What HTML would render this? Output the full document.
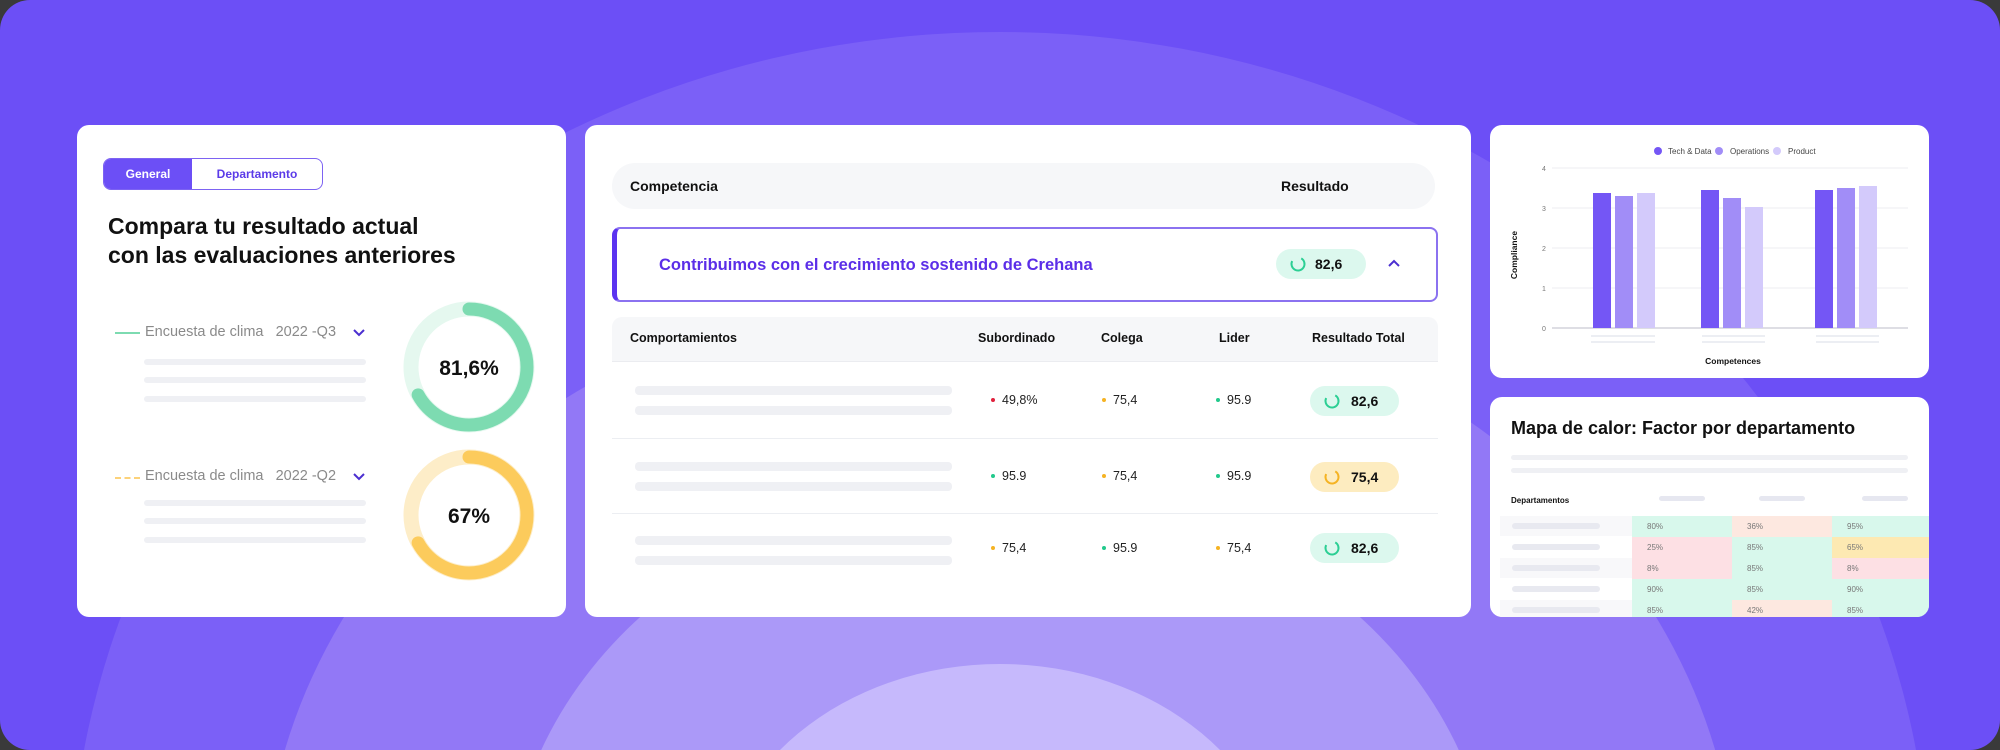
<!DOCTYPE html>
<html><head><meta charset="utf-8"><style>
*{margin:0;padding:0;box-sizing:border-box}
html,body{width:2000px;height:750px;overflow:hidden}
body{background:#3a3a3a;font-family:"Liberation Sans",sans-serif;position:relative}
#bg{position:absolute;left:0;top:0;width:2000px;height:750px}
.card{position:absolute;background:#fff;border-radius:12px;overflow:hidden}
.a{position:absolute;white-space:nowrap}
.bar{position:absolute;background:#eff0f4;border-radius:4px}
.dot{display:inline-block;width:4px;height:4px;border-radius:50%;margin-right:7px;vertical-align:middle;position:relative;top:-1px}
</style></head><body>
<svg id="bg" width="2000" height="750" viewBox="0 0 2000 750">
<defs><clipPath id="r"><rect x="0" y="0" width="2000" height="750" rx="30"/></clipPath></defs>
<g clip-path="url(#r)">
<rect width="2000" height="750" fill="#6c4ff6"/>
<ellipse cx="1000" cy="900" rx="930" ry="868" fill="#7b60f7"/>
<ellipse cx="1000" cy="900" rx="737" ry="621" fill="#9278f6"/>
<ellipse cx="1000" cy="900" rx="492" ry="415" fill="#ab99f8"/>
<ellipse cx="1000" cy="900" rx="285" ry="236" fill="#c6b9fc"/>
</g>
</svg>

<!-- Card 1 -->
<div class="card" style="left:77px;top:125px;width:489px;height:492px">
  <div class="a" style="left:26px;top:33px;width:220px;height:32px;border:1.5px solid #7d63f2;border-radius:8px;overflow:hidden">
    <div class="a" style="left:0;top:0;width:88px;height:30px;background:#6c4ff6;color:#fff;font-size:12px;font-weight:bold;text-align:center;line-height:30px">General</div>
    <div class="a" style="left:88px;top:0;width:130px;height:30px;color:#5b3be8;font-size:12px;font-weight:bold;text-align:center;line-height:30px">Departamento</div>
  </div>
  <div class="a" style="left:31px;top:87px;font-size:23px;line-height:29px;color:#111;font-weight:600">Compara tu resultado actual<br>con las evaluaciones anteriores</div>

  <div class="a" style="left:38px;top:207px;width:25px;height:2px;background:#7ddbb1"></div>
  <div class="a" style="left:68px;top:199px;font-size:14.5px;color:#8a8a8a">Encuesta de clima&nbsp;&nbsp;&nbsp;2022 -Q3</div>
  <svg class="a" style="left:275px;top:203px" width="14" height="9"><path d="M2 2 L7 7 L12 2" stroke="#4b2fd0" stroke-width="2" fill="none"/></svg>
  <div class="bar" style="left:67px;top:234px;width:222px;height:6px"></div>
  <div class="bar" style="left:67px;top:252px;width:222px;height:6px"></div>
  <div class="bar" style="left:67px;top:271px;width:222px;height:6px"></div>

  <div class="a" style="left:38px;top:352px;width:25px;height:0;border-top:2px dashed #fcd27a"></div>
  <div class="a" style="left:68px;top:343px;font-size:14.5px;color:#8a8a8a">Encuesta de clima&nbsp;&nbsp;&nbsp;2022 -Q2</div>
  <svg class="a" style="left:275px;top:347px" width="14" height="9"><path d="M2 2 L7 7 L12 2" stroke="#4b2fd0" stroke-width="2" fill="none"/></svg>
  <div class="bar" style="left:67px;top:375px;width:222px;height:6px"></div>
  <div class="bar" style="left:67px;top:393px;width:222px;height:6px"></div>
  <div class="bar" style="left:67px;top:412px;width:222px;height:6px"></div>

  <svg class="a" style="left:312px;top:162px" width="160" height="310" viewBox="0 0 160 310">
    <circle cx="80" cy="80" r="58" fill="none" stroke="#e5f8ef" stroke-width="15"/>
    <circle cx="80" cy="80" r="58" fill="none" stroke="#7ddbb1" stroke-width="13" stroke-linecap="round" stroke-dasharray="244 400" transform="rotate(-90 80 80)"/>
    <text x="80" y="88" text-anchor="middle" font-family="Liberation Sans" font-weight="bold" font-size="21" fill="#111">81,6%</text>
    <circle cx="80" cy="228" r="58" fill="none" stroke="#fdedc8" stroke-width="15"/>
    <circle cx="80" cy="228" r="58" fill="none" stroke="#fccb5c" stroke-width="13" stroke-linecap="round" stroke-dasharray="244 400" transform="rotate(-90 80 228)"/>
    <text x="80" y="236" text-anchor="middle" font-family="Liberation Sans" font-weight="bold" font-size="21" fill="#111">67%</text>
  </svg>
</div>

<!-- Card 2 -->
<div class="card" style="left:585px;top:125px;width:886px;height:492px">
  <div class="a" style="left:27px;top:38px;width:823px;height:46px;background:#f6f7f9;border-radius:23px"></div>
  <div class="a" style="left:45px;top:53px;font-size:14px;font-weight:600;color:#111">Competencia</div>
  <div class="a" style="left:696px;top:53px;font-size:14px;font-weight:600;color:#111">Resultado</div>

  <div class="a" style="left:27px;top:102px;width:826px;height:75px;border:2px solid #8b72f0;border-left:5px solid #5b33f0;border-radius:8px"></div>
  <div class="a" style="left:74px;top:131px;font-size:16.5px;font-weight:600;color:#5b2ee8">Contribuimos con el crecimiento sostenido de Crehana</div>
  <div class="a" style="left:691px;top:124px;width:90px;height:30px;background:#dcf8ee;border-radius:15px"></div>
  <svg class="a" style="left:704px;top:130px" width="18" height="18"><circle cx="9" cy="9" r="6.5" fill="none" stroke="#2ccf94" stroke-width="2" stroke-dasharray="30 41" transform="rotate(-60 9 9)"/></svg>
  <div class="a" style="left:730px;top:131px;font-size:14px;font-weight:600;color:#111">82,6</div>
  <svg class="a" style="left:802px;top:134px" width="14" height="9"><path d="M2 7 L7 2 L12 7" stroke="#4b2fd0" stroke-width="2" fill="none"/></svg>

  <div class="a" style="left:27px;top:192px;width:826px;height:45px;background:#f6f7f9;border-radius:10px 10px 0 0;border-bottom:1px solid #ebecf0"></div>
  <div class="a" style="left:45px;top:206px;font-size:12.5px;font-weight:600;color:#111">Comportamientos</div>
  <div class="a" style="left:393px;top:206px;font-size:12.5px;font-weight:600;color:#111">Subordinado</div>
  <div class="a" style="left:516px;top:206px;font-size:12.5px;font-weight:600;color:#111">Colega</div>
  <div class="a" style="left:634px;top:206px;font-size:12.5px;font-weight:600;color:#111">Lider</div>
  <div class="a" style="left:727px;top:206px;font-size:12.5px;font-weight:600;color:#111">Resultado Total</div>

  <div class="a" style="left:27px;top:313px;width:826px;height:1px;background:#eceef2"></div>
  <div class="a" style="left:27px;top:388px;width:826px;height:1px;background:#eceef2"></div>

  <div class="bar" style="left:50px;top:261px;width:317px;height:9px"></div>
  <div class="bar" style="left:50px;top:281px;width:317px;height:9px"></div>
  <div class="bar" style="left:50px;top:337px;width:317px;height:9px"></div>
  <div class="bar" style="left:50px;top:357px;width:317px;height:9px"></div>
  <div class="bar" style="left:50px;top:411px;width:317px;height:9px"></div>
  <div class="bar" style="left:50px;top:431px;width:317px;height:9px"></div>

  <div class="a" style="left:406px;top:268px;font-size:12.5px;color:#222"><span class="dot" style="background:#e0213d"></span>49,8%</div>
  <div class="a" style="left:517px;top:268px;font-size:12.5px;color:#222"><span class="dot" style="background:#f5b323"></span>75,4</div>
  <div class="a" style="left:631px;top:268px;font-size:12.5px;color:#222"><span class="dot" style="background:#22c98c"></span>95.9</div>

  <div class="a" style="left:406px;top:344px;font-size:12.5px;color:#222"><span class="dot" style="background:#22c98c"></span>95.9</div>
  <div class="a" style="left:517px;top:344px;font-size:12.5px;color:#222"><span class="dot" style="background:#f5b323"></span>75,4</div>
  <div class="a" style="left:631px;top:344px;font-size:12.5px;color:#222"><span class="dot" style="background:#22c98c"></span>95.9</div>

  <div class="a" style="left:406px;top:416px;font-size:12.5px;color:#222"><span class="dot" style="background:#f5b323"></span>75,4</div>
  <div class="a" style="left:517px;top:416px;font-size:12.5px;color:#222"><span class="dot" style="background:#22c98c"></span>95.9</div>
  <div class="a" style="left:631px;top:416px;font-size:12.5px;color:#222"><span class="dot" style="background:#f5b323"></span>75,4</div>

  <div class="a" style="left:725px;top:261px;width:89px;height:30px;background:#dcf8ee;border-radius:15px"></div>
  <svg class="a" style="left:738px;top:267px" width="18" height="18"><circle cx="9" cy="9" r="6.5" fill="none" stroke="#2ccf94" stroke-width="2" stroke-dasharray="30 41" transform="rotate(-60 9 9)"/></svg>
  <div class="a" style="left:766px;top:268px;font-size:14px;font-weight:600;color:#111">82,6</div>
  <div class="a" style="left:725px;top:337px;width:89px;height:30px;background:#fdecc0;border-radius:15px"></div>
  <svg class="a" style="left:738px;top:343px" width="18" height="18"><circle cx="9" cy="9" r="6.5" fill="none" stroke="#f5b323" stroke-width="2" stroke-dasharray="30 41" transform="rotate(-60 9 9)"/></svg>
  <div class="a" style="left:766px;top:344px;font-size:14px;font-weight:600;color:#111">75,4</div>
  <div class="a" style="left:725px;top:408px;width:89px;height:30px;background:#dcf8ee;border-radius:15px"></div>
  <svg class="a" style="left:738px;top:414px" width="18" height="18"><circle cx="9" cy="9" r="6.5" fill="none" stroke="#2ccf94" stroke-width="2" stroke-dasharray="30 41" transform="rotate(-60 9 9)"/></svg>
  <div class="a" style="left:766px;top:415px;font-size:14px;font-weight:600;color:#111">82,6</div>
</div>

<!-- Card 3 -->
<div class="card" style="left:1490px;top:125px;width:439px;height:253px">
  <svg width="439" height="253" style="position:absolute;left:0;top:0" font-family="Liberation Sans">
    <circle cx="168" cy="26" r="4" fill="#7456f5"/><text x="178" y="29" font-size="8" fill="#444">Tech &amp; Data</text>
    <circle cx="229" cy="26" r="4" fill="#a18df7"/><text x="240" y="29" font-size="8" fill="#444">Operations</text>
    <circle cx="287" cy="26" r="4" fill="#d3cafb"/><text x="298" y="29" font-size="8" fill="#444">Product</text>
    <g stroke="#eeeef2" stroke-width="1">
      <line x1="62" y1="43" x2="418" y2="43"/><line x1="62" y1="83" x2="418" y2="83"/><line x1="62" y1="123" x2="418" y2="123"/><line x1="62" y1="163" x2="418" y2="163"/>
    </g>
    <line x1="62" y1="203" x2="418" y2="203" stroke="#bdbdc9" stroke-width="1"/>
    <g font-size="7" fill="#777" text-anchor="middle"><text x="54" y="46">4</text><text x="54" y="86">3</text><text x="54" y="126">2</text><text x="54" y="166">1</text><text x="54" y="206">0</text></g>
    <rect x="103" y="68" width="18" height="135" fill="#7456f5"/><rect x="125" y="71" width="18" height="132" fill="#a18df7"/><rect x="147" y="68" width="18" height="135" fill="#d3cafb"/>
    <rect x="211" y="65" width="18" height="138" fill="#7456f5"/><rect x="233" y="73" width="18" height="130" fill="#a18df7"/><rect x="255" y="82" width="18" height="121" fill="#d3cafb"/>
    <rect x="325" y="65" width="18" height="138" fill="#7456f5"/><rect x="347" y="63" width="18" height="140" fill="#a18df7"/><rect x="369" y="61" width="18" height="142" fill="#d3cafb"/>
    <g stroke="#eceef3" stroke-width="2"><line x1="101" y1="211" x2="165" y2="211"/><line x1="101" y1="217" x2="165" y2="217"/><line x1="212" y1="211" x2="275" y2="211"/><line x1="212" y1="217" x2="275" y2="217"/><line x1="326" y1="211" x2="389" y2="211"/><line x1="326" y1="217" x2="389" y2="217"/></g>
    <text x="243" y="239" font-size="8.5" font-weight="bold" fill="#111" text-anchor="middle">Competences</text>
    <text x="0" y="0" font-size="8.5" font-weight="bold" fill="#111" text-anchor="middle" transform="translate(27 130) rotate(-90)">Compliance</text>
  </svg>
</div>

<!-- Card 4 -->
<div class="card" style="left:1490px;top:397px;width:439px;height:220px">
  <div class="a" style="left:21px;top:21px;font-size:18px;font-weight:600;color:#111">Mapa de calor: Factor por departamento</div>
  <div class="bar" style="left:21px;top:58px;width:397px;height:5px"></div>
  <div class="bar" style="left:21px;top:71px;width:397px;height:5px"></div>
  <div class="a" style="left:21px;top:99px;font-size:8px;font-weight:bold;color:#111">Departamentos</div>
  <div class="bar" style="left:169px;top:99px;width:46px;height:5px;background:#e6e7f0"></div>
  <div class="bar" style="left:269px;top:99px;width:46px;height:5px;background:#e6e7f0"></div>
  <div class="bar" style="left:372px;top:99px;width:46px;height:5px;background:#e6e7f0"></div>
  <svg width="439" height="101" style="position:absolute;left:0;top:119px" font-family="Liberation Sans">
    <g>
      <rect x="10" y="0" width="132" height="20" fill="#f8f8fa"/><rect x="10" y="42" width="132" height="20" fill="#f8f8fa"/><rect x="10" y="84" width="132" height="20" fill="#f8f8fa"/>
      <g fill="#e8e9f0"><rect x="22" y="7" width="88" height="6" rx="3"/><rect x="22" y="28" width="88" height="6" rx="3"/><rect x="22" y="49" width="88" height="6" rx="3"/><rect x="22" y="70" width="88" height="6" rx="3"/><rect x="22" y="91" width="88" height="6" rx="3"/></g>
      <rect x="142" y="0" width="100" height="21" fill="#d8f8ec"/><rect x="242" y="0" width="100" height="21" fill="#fde8e0"/><rect x="342" y="0" width="97" height="21" fill="#d8f8ec"/>
      <rect x="142" y="21" width="100" height="21" fill="#fde0e4"/><rect x="242" y="21" width="100" height="21" fill="#d8f8ec"/><rect x="342" y="21" width="97" height="21" fill="#fde9b2"/>
      <rect x="142" y="42" width="100" height="21" fill="#fde0e4"/><rect x="242" y="42" width="100" height="21" fill="#d8f8ec"/><rect x="342" y="42" width="97" height="21" fill="#fde0e4"/>
      <rect x="142" y="63" width="100" height="21" fill="#d8f8ec"/><rect x="242" y="63" width="100" height="21" fill="#d8f8ec"/><rect x="342" y="63" width="97" height="21" fill="#d8f8ec"/>
      <rect x="142" y="84" width="100" height="21" fill="#d8f8ec"/><rect x="242" y="84" width="100" height="21" fill="#fde8e0"/><rect x="342" y="84" width="97" height="21" fill="#d8f8ec"/>
    </g>
    <g font-size="8" fill="#777">
      <text x="157" y="13">80%</text><text x="257" y="13">36%</text><text x="357" y="13">95%</text>
      <text x="157" y="34">25%</text><text x="257" y="34">85%</text><text x="357" y="34">65%</text>
      <text x="157" y="55">8%</text><text x="257" y="55">85%</text><text x="357" y="55">8%</text>
      <text x="157" y="76">90%</text><text x="257" y="76">85%</text><text x="357" y="76">90%</text>
      <text x="157" y="97">85%</text><text x="257" y="97">42%</text><text x="357" y="97">85%</text>
    </g>
  </svg>
</div>
</body></html>
